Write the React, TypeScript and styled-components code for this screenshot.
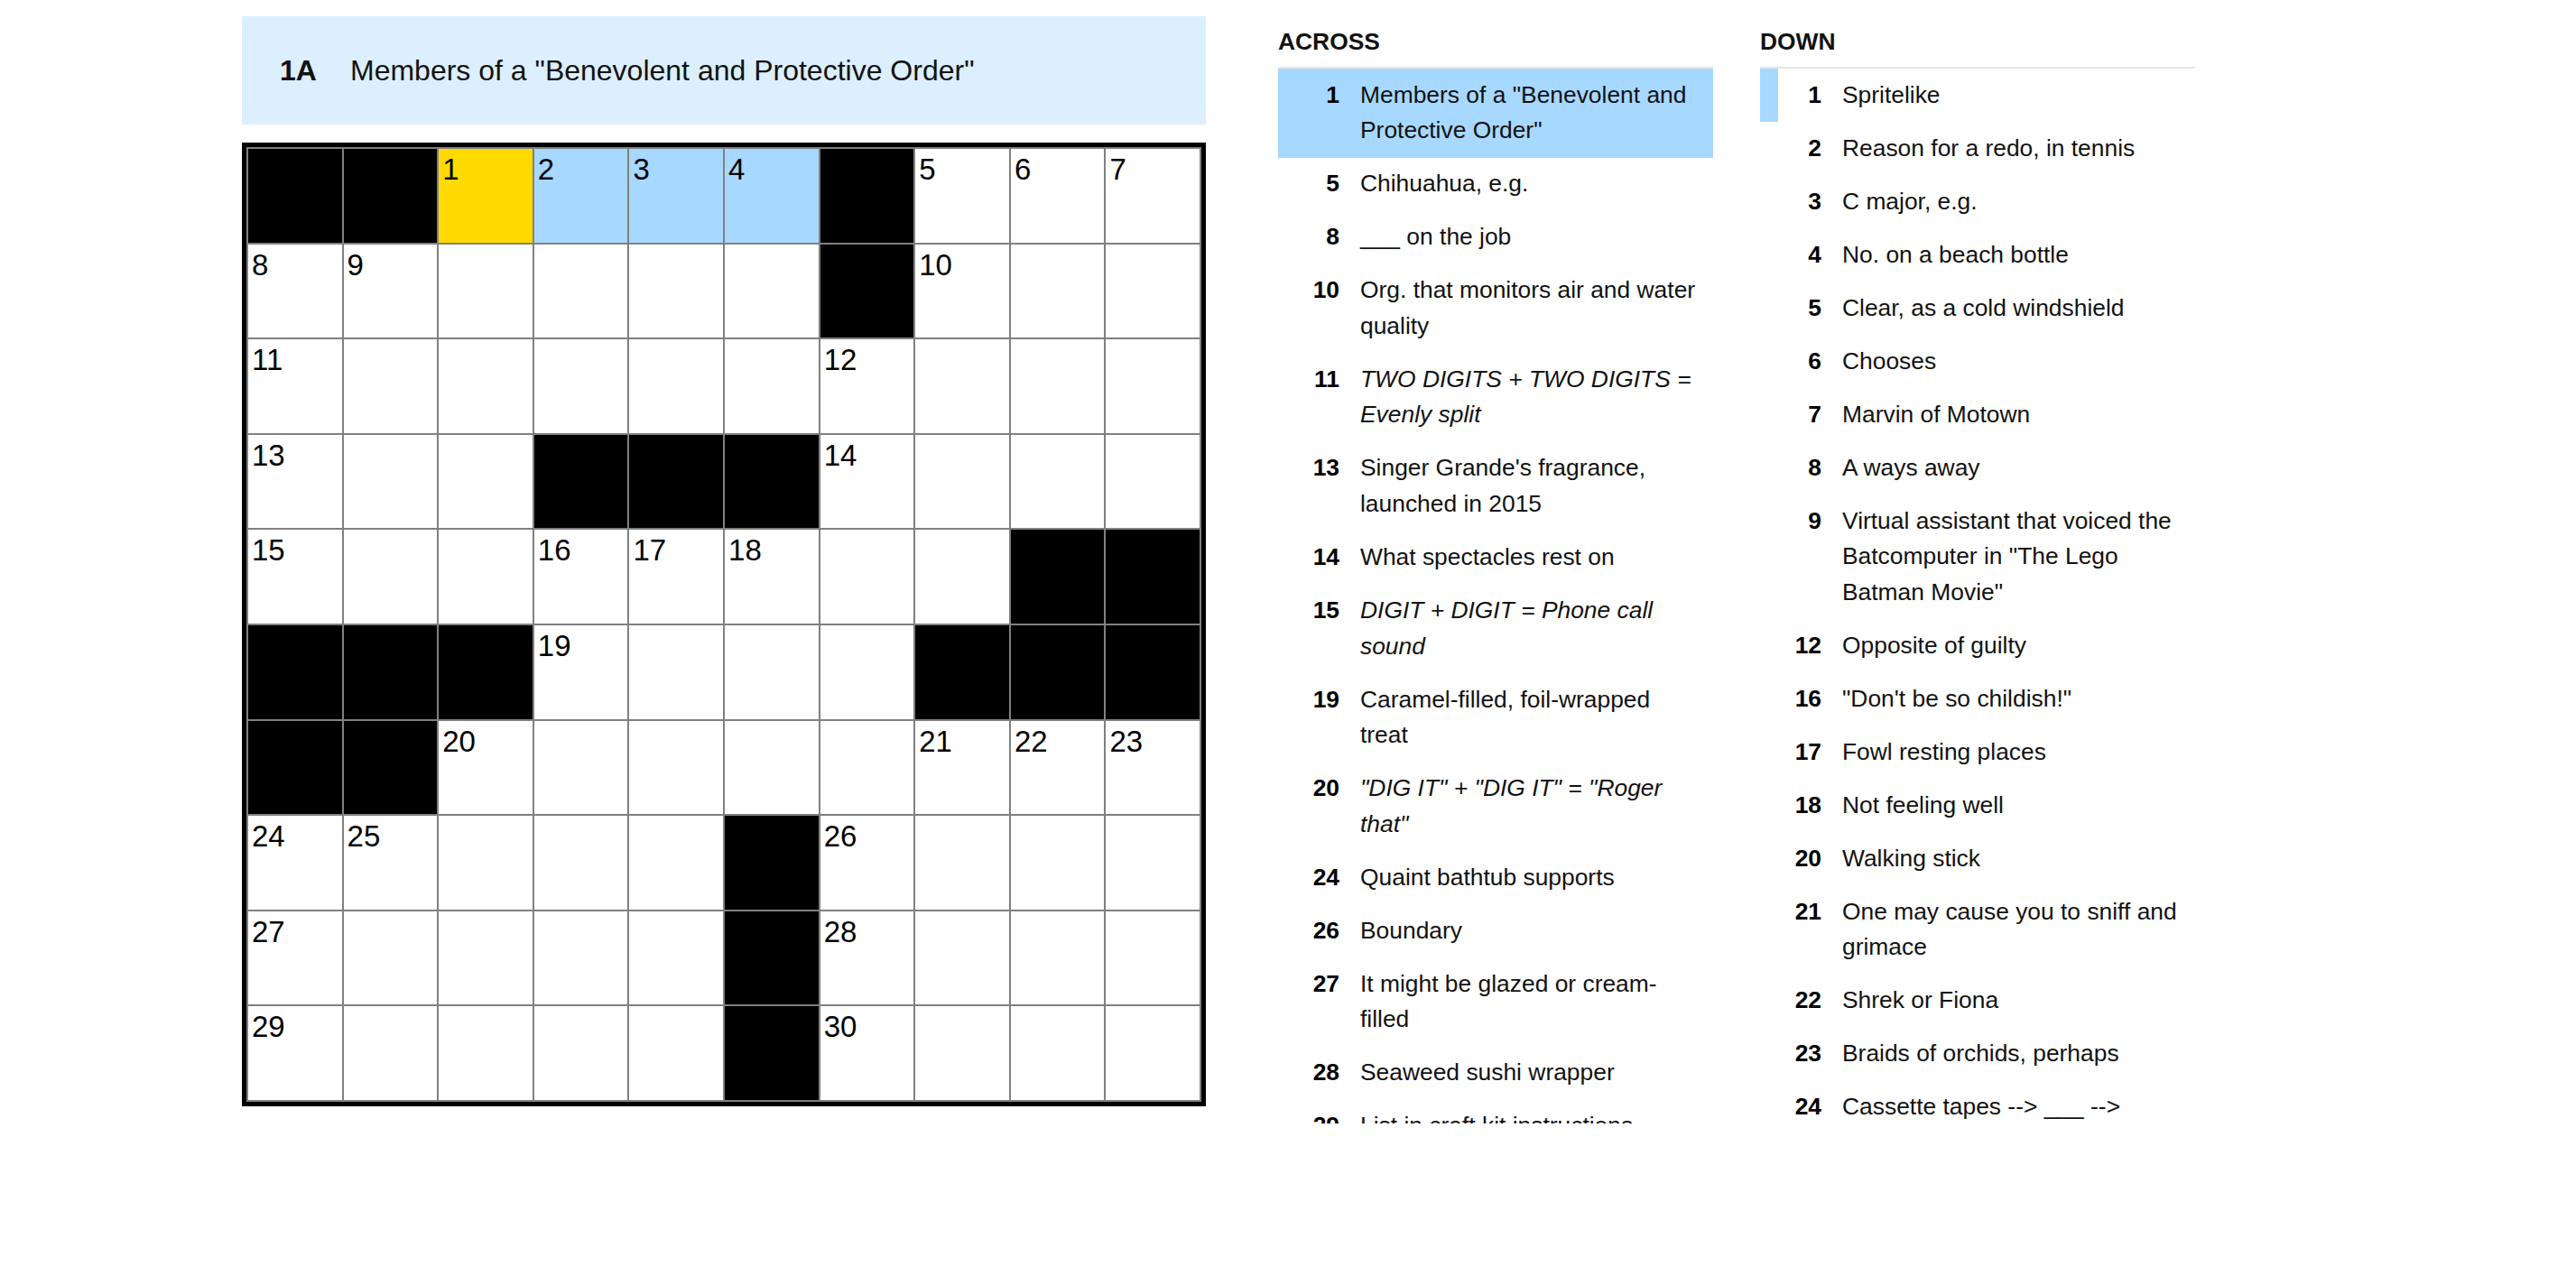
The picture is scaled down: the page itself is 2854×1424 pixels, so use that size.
import React from "react";
import styled, { createGlobalStyle, css } from "styled-components";

type Clue = { num: number; text: string; italic?: boolean };
type Tone = "block" | "open" | "focus" | "word";

const LAYOUT = [
  "##....#...",
  "......#...",
  "..........",
  "...###....",
  "........##",
  "###....###",
  "##........",
  ".....#....",
  ".....#....",
  ".....#....",
];

const SIZE = LAYOUT.length;

const ACROSS: Array<Clue> = [
  { num: 1, text: 'Members of a "Benevolent and Protective Order"' },
  { num: 5, text: "Chihuahua, e.g." },
  { num: 8, text: "___ on the job" },
  { num: 10, text: "Org. that monitors air and water quality" },
  { num: 11, text: "TWO DIGITS + TWO DIGITS = Evenly split", italic: true },
  { num: 13, text: "Singer Grande's fragrance, launched in 2015" },
  { num: 14, text: "What spectacles rest on" },
  { num: 15, text: "DIGIT + DIGIT = Phone call sound", italic: true },
  { num: 19, text: "Caramel-filled, foil-wrapped treat" },
  { num: 20, text: '"DIG IT" + "DIG IT" = "Roger that"', italic: true },
  { num: 24, text: "Quaint bathtub supports" },
  { num: 26, text: "Boundary" },
  { num: 27, text: "It might be glazed or cream-filled" },
  { num: 28, text: "Seaweed sushi wrapper" },
  { num: 29, text: "List in craft kit instructions" },
  { num: 30, text: "Grass-roots gathering spot" },
];

const DOWN: Array<Clue> = [
  { num: 1, text: "Spritelike" },
  { num: 2, text: "Reason for a redo, in tennis" },
  { num: 3, text: "C major, e.g." },
  { num: 4, text: "No. on a beach bottle" },
  { num: 5, text: "Clear, as a cold windshield" },
  { num: 6, text: "Chooses" },
  { num: 7, text: "Marvin of Motown" },
  { num: 8, text: "A ways away" },
  {
    num: 9,
    text: 'Virtual assistant that voiced the Batcomputer in "The Lego Batman Movie"',
  },
  { num: 12, text: "Opposite of guilty" },
  { num: 16, text: '"Don\'t be so childish!"' },
  { num: 17, text: "Fowl resting places" },
  { num: 18, text: "Not feeling well" },
  { num: 20, text: "Walking stick" },
  { num: 21, text: "One may cause you to sniff and grimace" },
  { num: 22, text: "Shrek or Fiona" },
  { num: 23, text: "Braids of orchids, perhaps" },
  { num: 24, text: "Cassette tapes --> ___ -->" },
  { num: 25, text: "Ocean motion" },
];

// active word: 1-Across, cursor on its first square
const FOCUS = { row: 0, col: 2 };
const WORD = { row: 0, from: 2, to: 5 };

function isOpen(r: number, c: number) {
  return r >= 0 && c >= 0 && r < SIZE && c < SIZE && LAYOUT[r][c] === ".";
}

function buildCells() {
  let next = 1;
  const cells: Array<{ key: string; tone: Tone; label?: number }> = [];
  for (let r = 0; r < SIZE; r++) {
    for (let c = 0; c < SIZE; c++) {
      if (!isOpen(r, c)) {
        cells.push({ key: `${r}-${c}`, tone: "block" });
        continue;
      }
      const startsAcross = !isOpen(r, c - 1) && isOpen(r, c + 1);
      const startsDown = !isOpen(r - 1, c) && isOpen(r + 1, c);
      let tone: Tone = "open";
      if (r === FOCUS.row && c === FOCUS.col) tone = "focus";
      else if (r === WORD.row && c >= WORD.from && c <= WORD.to) tone = "word";
      cells.push({
        key: `${r}-${c}`,
        tone,
        label: startsAcross || startsDown ? next++ : undefined,
      });
    }
  }
  return cells;
}

const CELLS = buildCells();

const toneColors: Record<Tone, string> = {
  block: "#000000",
  open: "#ffffff",
  focus: "#ffda00",
  word: "#a7d8ff",
};

export default function App() {
  return (
    <>
      <GlobalStyle />
      <Page>
        <Board>
          <ClueBar>
            <BarLabel>1A</BarLabel>
            <span>Members of a "Benevolent and Protective Order"</span>
          </ClueBar>
          <Grid>
            {CELLS.map((cell) => (
              <Cell key={cell.key} $tone={cell.tone}>
                {cell.label}
              </Cell>
            ))}
          </Grid>
        </Board>
        <ClueColumns>
          <ClueSection title="Across" clues={ACROSS} active={1} />
          <ClueSection title="Down" clues={DOWN} related={1} />
        </ClueColumns>
      </Page>
    </>
  );
}

function ClueSection(props: {
  title: string;
  clues: Array<Clue>;
  active?: number;
  related?: number;
}) {
  return (
    <ClueColumn>
      <ColumnTitle>{props.title}</ColumnTitle>
      <ClueList>
        {props.clues.map((clue) => (
          <ClueRow
            key={clue.num}
            $active={clue.num === props.active}
            $related={clue.num === props.related}
          >
            <ClueNumber>{clue.num}</ClueNumber>
            <ClueText $italic={!!clue.italic}>{clue.text}</ClueText>
          </ClueRow>
        ))}
      </ClueList>
    </ClueColumn>
  );
}

const GlobalStyle = createGlobalStyle`
  html, body {
    margin: 0;
    background: #ffffff;
  }
  body {
    font-family: "Liberation Sans", Arial, sans-serif;
    color: #121212;
  }
`;

const Page = styled.main`
  display: flex;
  align-items: flex-start;
  gap: 80px;
  padding: 18px 0 0 268px;
`;

const Board = styled.section`
  display: flex;
  flex-direction: column;
  gap: 20px;
  width: 1068px;
  flex-shrink: 0;
`;

const ClueBar = styled.div`
  display: flex;
  align-items: center;
  height: 120px;
  padding-left: 42px;
  background: #dcefff;
  font-size: 32px;
`;

const BarLabel = styled.span`
  width: 78px;
  flex-shrink: 0;
  font-weight: 700;
`;

const Grid = styled.div`
  display: grid;
  grid-template-columns: repeat(10, 1fr);
  gap: 2px;
  box-sizing: border-box;
  width: 1068px;
  padding: 2px;
  border: 5px solid #000000;
  background: #808080;
`;

const Cell = styled.div<{ $tone: Tone }>`
  aspect-ratio: 1;
  box-sizing: border-box;
  padding: 6px 4px;
  font-family: "Liberation Sans", Arial, sans-serif;
  font-size: 33px;
  line-height: 1;
  color: #000000;
  background: ${({ $tone }) => toneColors[$tone]};
`;

const ClueColumns = styled.div`
  display: flex;
  gap: 52px;
`;

const ClueColumn = styled.section`
  width: 482px;
`;

const ColumnTitle = styled.h3`
  margin: 0;
  padding: 8.5px 0 8px;
  border-bottom: 2px solid #e6e6e6;
  font-size: 26.4px;
  line-height: 39.6px;
  font-weight: 700;
  text-transform: uppercase;
`;

const ClueList = styled.ol`
  height: 1169px;
  margin: 0;
  padding: 0;
  overflow: hidden;
  list-style: none;
`;

const ClueRow = styled.li<{ $active: boolean; $related: boolean }>`
  display: grid;
  grid-template-columns: 68px 1fr;
  column-gap: 23px;
  padding: 9.7px 12px 9.7px 0;
  font-size: 26.4px;
  line-height: 39.6px;
  ${({ $active }) =>
    $active &&
    css`
      background: #a7d8ff;
    `}
  ${({ $related }) =>
    $related &&
    css`
      box-shadow: inset 20px 0 0 #a7d8ff;
    `}
`;

const ClueNumber = styled.span`
  font-weight: 700;
  text-align: right;
  color: #000000;
`;

const ClueText = styled.span<{ $italic: boolean }>`
  font-style: ${({ $italic }) => ($italic ? "italic" : "normal")};
`;
